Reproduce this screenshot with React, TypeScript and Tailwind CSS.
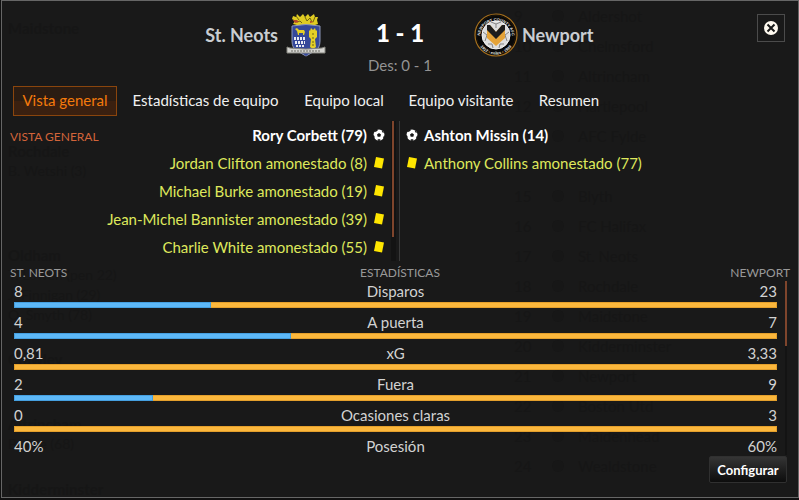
import clsx from "clsx";

type Event = {
  kind: "goal" | "card";
  text: string;
};

type Stat = {
  label: string;
  home: string;
  away: string;
  share?: number;
};

const tabs = [
  { label: "Vista general", width: "w-[104px]" },
  { label: "Estadísticas de equipo", width: "w-[167px]" },
  { label: "Equipo local", width: "w-[100px]" },
  { label: "Equipo visitante", width: "w-[124px]" },
  { label: "Resumen", width: "w-[82px]" },
];

const homeEvents: Event[] = [
  { kind: "goal", text: "Rory Corbett (79)" },
  { kind: "card", text: "Jordan Clifton amonestado (8)" },
  { kind: "card", text: "Michael Burke amonestado (19)" },
  { kind: "card", text: "Jean-Michel Bannister amonestado (39)" },
  { kind: "card", text: "Charlie White amonestado (55)" },
];

const awayEvents: Event[] = [
  { kind: "goal", text: "Ashton Missin (14)" },
  { kind: "card", text: "Anthony Collins amonestado (77)" },
];

// share is the home side's part of the bar, in percent
const stats: Stat[] = [
  { label: "Disparos", home: "8", away: "23", share: 25.8 },
  { label: "A puerta", home: "4", away: "7", share: 36.3 },
  { label: "xG", home: "0,81", away: "3,33", share: 0 },
  { label: "Fuera", home: "2", away: "9", share: 18.2 },
  { label: "Ocasiones claras", home: "0", away: "3", share: 0 },
  { label: "Posesión", home: "40%", away: "60%" },
];

const results = [
  { team: "Maidstone", scorers: [], height: "h-[123px]" },
  { team: "Rochdale", scorers: ["B. Wetshi (3)"], height: "h-[104px]" },
  {
    team: "Oldham",
    scorers: ["T. Lowen (pen 22)", "J. Finnigan (29)", "O. Smyth (78)"],
    height: "h-[104px]",
  },
  { team: "Crawley", scorers: [], height: "h-[65px]" },
  { team: "Altrincham", scorers: ["B. Pye (68)"], height: "h-[65px]" },
  { team: "Kidderminster", scorers: [], height: "h-4" },
];

const standings = [
  "Aldershot",
  "Chelmsford",
  "Altrincham",
  "Hartlepool",
  "AFC Fylde",
  "",
  "Blyth",
  "FC Halifax",
  "St. Neots",
  "Rochdale",
  "Maidstone",
  "Kidderminster",
  "Newport",
  "Boston Utd",
  "Maidenhead",
  "Wealdstone",
];

// The results screen that shows faintly through the dialog
const Backdrop = () => (
  <div
    className="absolute inset-0 -z-10 flex justify-between text-[#161616]"
    aria-hidden="true"
  >
    <div className="pt-[19px] pl-[6px]">
      {results.map((result) => (
        <div key={result.team} className={result.height}>
          <p className="leading-4 font-bold">{result.team}</p>
          {result.scorers.length > 0 && (
            <ul className="pt-[2px] text-sm leading-5">
              {result.scorers.map((scorer) => (
                <li key={scorer}>{scorer}</li>
              ))}
            </ul>
          )}
        </div>
      ))}
    </div>
    <ul className="w-[284px]">
      {standings.map((team, i) => (
        <li key={i} className="grid h-[30px] grid-cols-[38px_26px_1fr] items-center">
          {team && (
            <>
              <span>{i + 9}</span>
              <span className="size-3 rounded-full bg-[#171717]" />
              <span>{team}</span>
            </>
          )}
        </li>
      ))}
    </ul>
  </div>
);

const StNeotsCrest = () => (
  <svg viewBox="0 0 40 44" className="h-11 w-10 shrink-0" aria-hidden="true">
    <path
      d="M7 3l3 1 1-3 3 3 3-3 2 3 3-3 2 3 4-3 1 3 3 0-1 3 1 4-3 1H11l-4-1 2-3-3-2z"
      fill="#e0cc22"
    />
    <path d="M7 7l4 2 3-1 2 2M19 4l2 4 3-3 2 4M10 3l3 4M29 4l-2 5" stroke="#6f6412" fill="none" />
    <path d="M7 7h4l2 2-4 1zM24 8l4 1-4 1z" fill="#b5482a" />
    <path
      d="M6 13q14-3 28 0v15q0 7-5 10l-9 5-9-5q-5-3-5-10z"
      fill="#35489a"
      stroke="#8c96b8"
    />
    <path d="M9 16l2-1 2 2h5l1 2-1 3h-1v-2h-4v2h-1l-1-4z" fill="#e5cf27" />
    <path
      d="M25 15l2 2 2-2 1 3 1-1v7l-2 2 1 8-3 2-3-2 1-8-2-2v-7l1 1z"
      fill="#e5cf27"
    />
    <path d="M26 21h2M26 25h2M26 29h2M26 32h2" stroke="#6f6412" />
    <path
      d="M8 24h2v3H8zm3 0h2v3h-2zm3 0h2v3h-2zm3 0h2v3h-2zM9 28h2v3H9zm3 0h2v3h-2zm3 0h2v3h-2zm3 0h1v3h-1zM10 32h2v2h-2zm3 0h2v2h-2zm3 0h2v2h-2z"
      fill="#e8eaf2"
    />
    <path d="M1 34l3 1q16 2 32 0l3-1v6H1z" fill="#d4d4d0" stroke="#85857f" />
    <path d="M5 38h30" stroke="#8d8d87" strokeWidth="1.5" strokeDasharray="2 1" />
    <path d="M18 41h4l-2 2z" fill="#35489a" />
  </svg>
);

const NewportCrest = () => (
  <svg viewBox="0 0 44 44" className="size-11 shrink-0" aria-hidden="true">
    <defs>
      <path id="crest-top" d="M6.300 27a16 16 0 1 1 31.400 0" />
      <path id="crest-bottom" d="M2.800 25a19.400 19.400 0 0 0 38.400 0" />
    </defs>
    <circle cx="22" cy="22" r="21" fill="#080808" stroke="#a8711d" strokeWidth="1.200" />
    <circle cx="22" cy="22" r="19.500" fill="none" stroke="#34250d" strokeWidth=".5" />
    <g fontSize="4" fontWeight="700" fill="#e4e4e4" fontFamily="Liberation Sans, sans-serif">
      <text>
        <textPath href="#crest-top" startOffset="50%" textAnchor="middle">
          NEWPORT COUNTY AFC
        </textPath>
      </text>
      <text>
        <textPath href="#crest-bottom" startOffset="50%" textAnchor="middle">
          1912 <tspan fill="#e5a338">•</tspan> exiles <tspan fill="#e5a338">•</tspan> 1989
        </textPath>
      </text>
    </g>
    <circle cx="22" cy="22" r="14" fill="#dedede" stroke="#f4f4f4" />
    <path
      d="M17 9l5 2 5-2M22 11v4M9 19l4 3-2 6M35 19l-4 3 2 6M14 31l4 0 1 4M30 31l-4 0-1 4"
      fill="none"
      stroke="#858585"
    />
    <path d="M13 12h3l6 7 6-7h3v13l-9 8-9-8z" fill="#e5a338" />
    <path d="M13 12h3l6 7 6-7h3v5l-9 9-9-9z" fill="#1d1d1d" />
  </svg>
);

const BallIcon = () => (
  <svg viewBox="0 0 12 12" className="size-3 shrink-0" aria-hidden="true">
    <circle cx="6" cy="6" r="5.500" fill="#fff" />
    <path
      d="M6 4l2 1.500-.7 2.300H4.700L4 5.500zM3 .5l2 .8-2 1.500-2 .3zM9.500 1.500l1.500 2.500-1.500-.5-.8-1.700zM0 6l1.500 1v2.500L0 8zM12 6l-1.500 1.500-.5 2 1.500-.5zM4.500 10.300h3L6.500 12h-1z"
      fill="#191919"
    />
  </svg>
);

const CardIcon = () => (
  <svg viewBox="0 0 12 12" className="size-3 shrink-0" aria-hidden="true">
    <path d="M3 0l8 1.500-2 10L1 10z" fill="#ffe600" />
  </svg>
);

const EventRow = ({ event, home }: { event: Event; home?: boolean }) => (
  <li
    className={clsx(
      "flex h-7 items-center gap-[6px]",
      home && "flex-row-reverse",
      event.kind === "goal" ? "font-bold text-white" : "text-[#dfe85c]"
    )}
  >
    {event.kind === "goal" ? <BallIcon /> : <CardIcon />}
    <span>{event.text}</span>
  </li>
);

const StatRow = ({ stat }: { stat: Stat }) => (
  <li className="h-[31px]">
    <div className="grid grid-cols-[1fr_2fr_1fr] text-[#d2d2d2]">
      <span>{stat.home}</span>
      <span className="text-center">{stat.label}</span>
      <span className="text-right">{stat.away}</span>
    </div>
    {stat.share !== undefined && (
      <div className="mt-px h-[6px] bg-[#fbb73c] shadow-[inset_0_0_0_1px_#e39f2c]">
        <div
          className="h-full bg-[#5db8f7] shadow-[inset_0_0_0_1px_#459fdf]"
          style={{ width: `${stat.share}%` }}
        />
      </div>
    )}
  </li>
);

const App = () => {
  return (
    <div className="min-h-screen bg-[#101010] pb-[2px] pl-px font-['Lato',sans-serif] text-[15px] leading-5">
      <main className="relative isolate flex min-h-[498px] flex-col border border-[#666] bg-[#191919]">
        <Backdrop />
        <header className="grid h-20 grid-cols-[1fr_148px_1fr]">
          <div className="flex items-center justify-end gap-2 pb-3">
            <h2 className="text-lg font-bold text-[#c9cdd1]">St. Neots</h2>
            <StNeotsCrest />
          </div>
          <div className="pt-4 text-center">
            <p className="text-2xl font-black text-white">1 - 1</p>
            <p className="pt-[6px] text-[#939393]">Des: 0 - 1</p>
          </div>
          <div className="flex items-start justify-between pr-[13px]">
            <div className="flex h-[68px] items-center gap-1">
              <NewportCrest />
              <h2 className="text-lg font-bold text-[#c9cdd1]">Newport</h2>
            </div>
            <button
              aria-label="Cerrar"
              className="mt-[13px] flex size-7 items-center justify-center border border-[#4b4b4b]"
            >
              <svg viewBox="0 0 14 14" className="size-[14px]" aria-hidden="true">
                <circle cx="7" cy="7" r="7" fill="#fffaf0" />
                <path d="M3.500 3.500l7 7M10.500 3.500l-7 7" stroke="#191919" strokeWidth="2" />
              </svg>
            </button>
          </div>
        </header>

        <nav className="flex gap-[5px] px-[11px] pt-[5px]">
          {tabs.map((tab, i) => (
            <button
              key={tab.label}
              className={clsx(
                "h-[30px] border pb-[2px] whitespace-nowrap",
                tab.width,
                i === 0
                  ? "border-[#8a450d] bg-linear-to-b from-[#2b1c12] from-50% to-[#3a2010] to-50% text-[#f47a0c]"
                  : "border-transparent text-[#f0f0f0]"
              )}
            >
              {tab.label}
            </button>
          ))}
        </nav>

        <section className="mt-[5px] grid h-[140px] grid-cols-2">
          <div className="flex justify-between border-r border-[#3a3a3a] pr-[3px] pl-2">
            <h3 className="pt-[6px] text-xs leading-5 whitespace-nowrap text-[#d2643a]">
              VISTA GENERAL
            </h3>
            <div className="flex gap-[6px]">
              <ul>
                {homeEvents.map((event) => (
                  <EventRow key={event.text} event={event} home />
                ))}
              </ul>
              <div className="w-[5px] bg-[#131313]">
                <div className="ml-px h-[116px] w-[2px] bg-[#7f452c]" />
              </div>
            </div>
          </div>
          <ul className="pl-[6px]">
            {awayEvents.map((event) => (
              <EventRow key={event.text} event={event} />
            ))}
          </ul>
        </section>

        <section>
          <div className="mt-[2px] grid h-[18px] grid-cols-3 items-center px-2 pt-px text-xs text-[#999]">
            <h3>ST. NEOTS</h3>
            <h3 className="text-center">ESTADÍSTICAS</h3>
            <h3 className="text-right">NEWPORT</h3>
          </div>
          <div className="flex h-[174px] gap-2 pr-[11px] pl-3">
            <ul className="flex-1">
              {stats.map((stat) => (
                <StatRow key={stat.label} stat={stat} />
              ))}
            </ul>
            <div className="w-[2px] bg-[#131313]">
              <div className="h-[65px] bg-[#7f452c]" />
            </div>
          </div>
        </section>

        <footer className="flex justify-end pt-px pr-[11px]">
          <button className="h-[27px] w-[78px] rounded-xs border border-[#303030] bg-linear-to-b from-[#353535] to-[#0d0d0d] text-[13px] font-bold text-white">
            Configurar
          </button>
        </footer>
      </main>
    </div>
  );
};

export default App;
